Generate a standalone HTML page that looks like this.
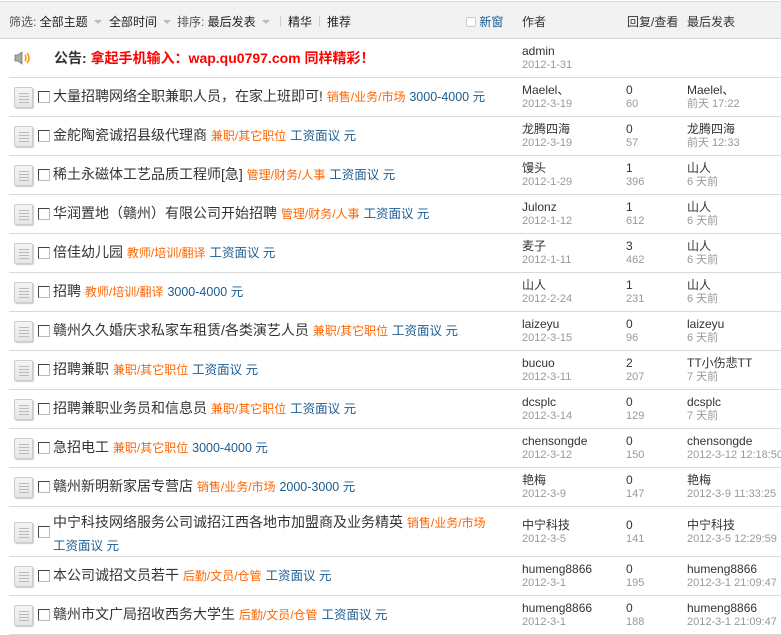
<!DOCTYPE html><html><head><meta charset="utf-8"><style>
*{margin:0;padding:0;box-sizing:border-box}
body{width:781px;height:614px;overflow:hidden;background:#fff;font-family:"Liberation Sans","Noto Sans CJK SC",sans-serif;font-size:13px;color:#333;position:relative}
.hd{position:absolute;left:0;top:1px;width:781px;height:38px;background:#f2f2f2;border-top:1px solid #ddd;border-bottom:1px solid #d4d4d4;font-size:12px}
.hd span{position:absolute;top:11px;white-space:nowrap}
.tri{display:inline-block;width:0;height:0;border-left:4px solid transparent;border-right:4px solid transparent;border-top:4px solid #bbb;margin-left:6px;vertical-align:2px}
.row{position:absolute;left:9px;width:772px;border-bottom:1px solid #d9d9d9}
.ic{position:absolute;left:5px;width:19px;height:21px;border:1px solid #ccc;border-radius:2px;background:linear-gradient(#f4f4f4,#e6e6e6);box-shadow:1px 1px 1px #ccc}
.ic i{position:absolute;left:4px;width:10px;height:1px;background:#bbb}
.cb{position:absolute;left:29px;width:12px;height:12px;border:1px solid #444;border-right-color:#bbb;border-bottom-color:#bbb;background:#fff}
.t{position:absolute;left:44px;white-space:nowrap;font-size:14px;line-height:22px}
.o{color:#f60;font-size:12px}.b{color:#1a5c92;font-size:12.5px}
.a,.r,.l{position:absolute;font-size:12px;line-height:13px;white-space:nowrap}
.a{left:513px}.r{left:617px}.l{left:678px}
.g{color:#999;font-size:11px}
</style></head><body>
<div class="hd">
<span style="left:9px;color:#555">筛选: <span style="position:static;color:#222">全部主题</span><i class="tri"></i></span>
<span style="left:109px;color:#222">全部时间<i class="tri"></i></span>
<span style="left:177px;color:#555">排序: <span style="position:static;color:#222">最后发表</span><i class="tri"></i></span>
<span style="left:279px;color:#ccc">|</span>
<span style="left:288px;color:#222">精华</span>
<span style="left:318px;color:#ccc">|</span>
<span style="left:327px;color:#222">推荐</span>
<span style="left:466px"><i style="display:inline-block;width:10px;height:10px;border:1px solid #ccc;background:#fff;vertical-align:-1px;border-radius:2px"></i> <b style="color:#1a5c92;font-weight:normal">新窗</b></span>
<span style="left:522px">作者</span><span style="left:627px">回复/查看</span><span style="left:687px">最后发表</span>
</div>

<div class="row" style="top:39px;height:39px">
<svg style="position:absolute;left:5px;top:12px" width="18" height="14" viewBox="0 0 18 14"><path d="M1 4h3l4-3v12l-4-3H1z" fill="#aaa" stroke="#777" stroke-width=".8"/><path d="M11 4q2 3 0 6M13 2q4 5 0 10" fill="none" stroke="#f90" stroke-width="1.6"/></svg>
<div class="t" style="top:8px;font-weight:bold;font-size:14px;left:45px">公告: <span style="color:#f00">拿起手机输入：wap.qu0797.com 同样精彩！</span></div>
<div class="a" style="top:6px">admin<br><span class="g">2012-1-31</span></div>
</div>

<div id="rows"></div>
<script>
var d=[
["大量招聘网络全职兼职人员，在家上班即可! ","销售/业务/市场","3000-4000 元","Maelel、","2012-3-19","0","60","Maelel、","前天 17:22"],
["金舵陶瓷诚招县级代理商 ","兼职/其它职位","工资面议 元","龙腾四海","2012-3-19","0","57","龙腾四海","前天 12:33"],
["稀土永磁体工艺品质工程师[急] ","管理/财务/人事","工资面议 元","馒头","2012-1-29","1","396","山人","6 天前"],
["华润置地（赣州）有限公司开始招聘 ","管理/财务/人事","工资面议 元","Julonz","2012-1-12","1","612","山人","6 天前"],
["倍佳幼儿园 ","教师/培训/翻译","工资面议 元","麦子","2012-1-11","3","462","山人","6 天前"],
["招聘 ","教师/培训/翻译","3000-4000 元","山人","2012-2-24","1","231","山人","6 天前"],
["赣州久久婚庆求私家车租赁/各类演艺人员 ","兼职/其它职位","工资面议 元","laizeyu","2012-3-15","0","96","laizeyu","6 天前"],
["招聘兼职 ","兼职/其它职位","工资面议 元","bucuo","2012-3-11","2","207","TT小伤悲TT","7 天前"],
["招聘兼职业务员和信息员 ","兼职/其它职位","工资面议 元","dcsplc","2012-3-14","0","129","dcsplc","7 天前"],
["急招电工 ","兼职/其它职位","3000-4000 元","chensongde","2012-3-12","0","150","chensongde","2012-3-12 12:18:50"],
["赣州新明新家居专营店 ","销售/业务/市场","2000-3000 元","艳梅","2012-3-9","0","147","艳梅","2012-3-9 11:33:25"],
["中宁科技网络服务公司诚招江西各地市加盟商及业务精英 ","销售/业务/市场","工资面议 元","中宁科技","2012-3-5","0","141","中宁科技","2012-3-5 12:29:59"],
["本公司诚招文员若干 ","后勤/文员/仓管","工资面议 元","humeng8866","2012-3-1","0","195","humeng8866","2012-3-1 21:09:47"],
["赣州市文广局招收西务大学生 ","后勤/文员/仓管","工资面议 元","humeng8866","2012-3-1","0","188","humeng8866","2012-3-1 21:09:47"]];
var h="",y=78;
d.forEach(function(r,i){var two=i==11,H=two?50:39;var c=two?25:19;
var title=two?'<div class="t" style="top:4px;line-height:22px">'+r[0]+'<span class="o">'+r[1]+'</span><br><span class="b">'+r[2]+'</span></div>':'<div class="t" style="top:7px">'+r[0]+'<span class="o">'+r[1]+'</span> <span class="b">'+r[2]+'</span></div>';
var ty=c-13;
h+='<div class="row" style="top:'+y+'px;height:'+H+'px"><div class="ic" style="top:'+(c-10)+'px"><i style="top:5px"></i><i style="top:8px"></i><i style="top:11px"></i><i style="top:14px"></i></div><div class="cb" style="top:'+(c-6)+'px"></div>'+title+'<div class="a" style="top:'+ty+'px">'+r[3]+'<br><span class="g">'+r[4]+'</span></div><div class="r" style="top:'+ty+'px">'+r[5]+'<br><span class="g">'+r[6]+'</span></div><div class="l" style="top:'+ty+'px">'+r[7]+'<br><span class="g">'+r[8]+'</span></div></div>';
y+=H;});
document.getElementById("rows").innerHTML=h;
</script>
</body></html>
